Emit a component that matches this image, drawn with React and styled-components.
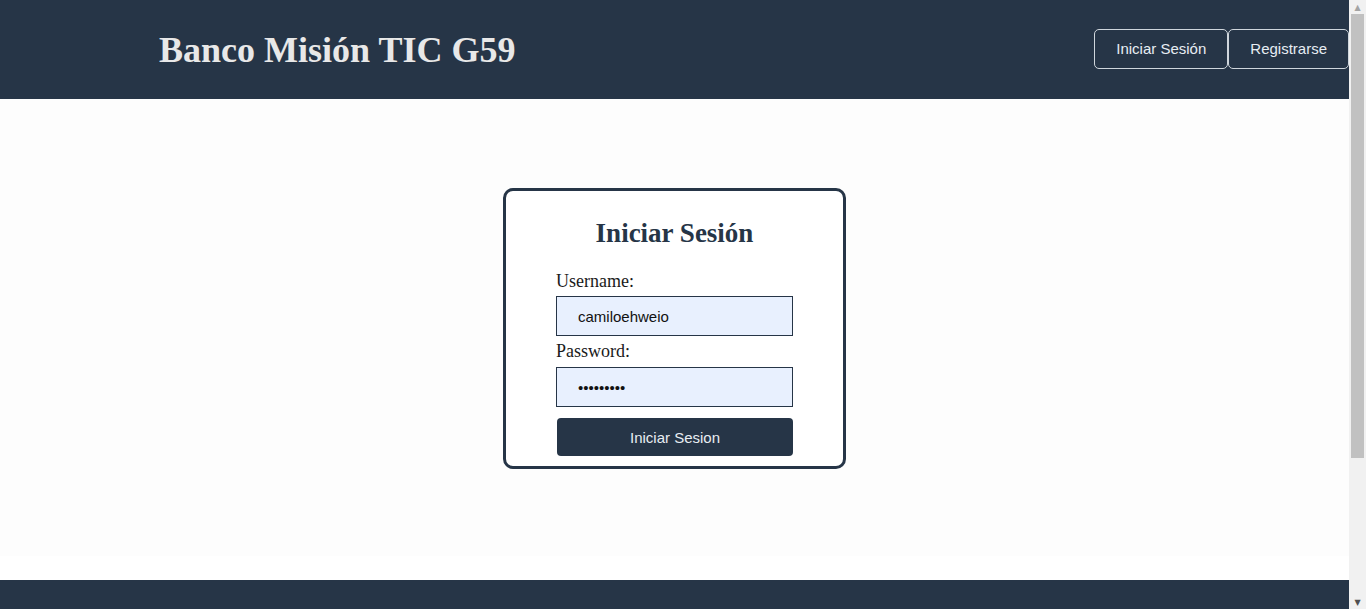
import React from 'react';
import styled, { createGlobalStyle } from 'styled-components';

const GlobalStyle = createGlobalStyle`
  html, body {
    margin: 0;
    padding: 0;
  }
  body {
    font-family: "Liberation Serif", "Times New Roman", serif;
    background: #ffffff;
  }
  * {
    box-sizing: border-box;
  }
`;

const Page = styled.div`
  width: calc(100% - 17px);
`;

/* window scrollbar as seen in the screenshot */
const ScrollTrack = styled.div`
  position: fixed;
  top: 0;
  right: 0;
  width: 17px;
  height: 100vh;
  background: #f1f1f1;
  display: flex;
  flex-direction: column;
  align-items: center;
`;

const ScrollArrow = styled.div`
  height: 14px;
  display: flex;
  align-items: center;
  justify-content: center;
  color: ${p => (p.$dim ? '#a3a3a3' : '#505050')};
  font-size: 8px;
  font-family: "DejaVu Sans", sans-serif;
`;

const ScrollThumb = styled.div`
  width: 13px;
  height: 444px;
  background: #c1c1c1;
`;

const ScrollFill = styled.div`
  flex: 1;
`;

const Header = styled.header`
  height: 99px;
  background: #263547;
  display: flex;
  align-items: center;
  justify-content: space-between;
  padding: 0 0 0 159px;
`;

const Brand = styled.h1`
  margin: 0;
  font-size: 36px;
  font-weight: bold;
  color: #e8e8e8;
  font-family: "Liberation Serif", "Times New Roman", serif;
`;

const Nav = styled.nav`
  display: flex;
  align-items: center;
  margin-top: -2px;
`;

const NavButton = styled.button`
  height: 40px;
  padding: 0 21px;
  background: transparent;
  color: #e6edf3;
  border: 1px solid #cfd6dc;
  border-radius: 5px;
  font-family: "Liberation Sans", Arial, sans-serif;
  font-size: 15px;
  cursor: pointer;
`;

const Main = styled.main`
  height: 457px;
  background: #fdfdfd;
  display: flex;
  justify-content: center;
  align-items: flex-start;
  padding-top: 89px;
`;

const Card = styled.div`
  width: 343px;
  border: 3px solid #263547;
  border-radius: 10px;
  background: #ffffff;
  display: flex;
  flex-direction: column;
  align-items: center;
  padding: 27px 0 10px;
`;

const Title = styled.h2`
  margin: 0 0 23px;
  font-size: 27px;
  line-height: 30px;
  font-weight: bold;
  color: #263547;
  font-family: "Liberation Serif", "Times New Roman", serif;
`;

const Form = styled.form`
  width: 237px;
  display: flex;
  flex-direction: column;
`;

const Label = styled.label`
  font-size: 18px;
  color: #1a1a1a;
  line-height: 21px;
  margin-bottom: 4px;
`;

const Input = styled.input`
  width: 237px;
  height: 40px;
  border: 1px solid #263547;
  background: #e8f0fe;
  padding: 0 0 0 21px;
  font-family: "Liberation Sans", Arial, sans-serif;
  font-size: 15px;
  color: #111;
  margin-top: ${p => p.$top || 0}px;
  margin-bottom: ${p => p.$gap || 0}px;
  outline: none;
  border-radius: 0;
`;

const Submit = styled.button`
  width: 236px;
  height: 38px;
  margin-left: 1px;
  border: none;
  border-radius: 4px;
  background: #263547;
  color: #e8edf2;
  font-family: "Liberation Sans", Arial, sans-serif;
  font-size: 15px;
  cursor: pointer;
`;

const Spacer = styled.div`
  height: 24px;
  background: #ffffff;
`;

const Footer = styled.footer`
  height: 220px;
  background: #263547;
`;

export default function App() {
  return (
    <>
      <GlobalStyle />
      <Page>
        <Header>
          <Brand>Banco Misión TIC G59</Brand>
          <Nav>
            <NavButton>Iniciar Sesión</NavButton>
            <NavButton>Registrarse</NavButton>
          </Nav>
        </Header>
        <Main>
          <Card>
            <Title>Iniciar Sesión</Title>
            <Form onSubmit={e => e.preventDefault()}>
              <Label htmlFor="username">Username:</Label>
              <Input id="username" type="text" defaultValue="camiloehweio" $gap={5} />
              <Label htmlFor="password">Password:</Label>
              <Input id="password" type="password" defaultValue="camilo123" $top={1} $gap={11} />
              <Submit type="submit">Iniciar Sesion</Submit>
            </Form>
          </Card>
        </Main>
        <Spacer />
        <Footer />
      </Page>
      <ScrollTrack>
        <ScrollArrow $dim>▲</ScrollArrow>
        <ScrollThumb />
        <ScrollFill />
        <ScrollArrow>▼</ScrollArrow>
      </ScrollTrack>
    </>
  );
}
